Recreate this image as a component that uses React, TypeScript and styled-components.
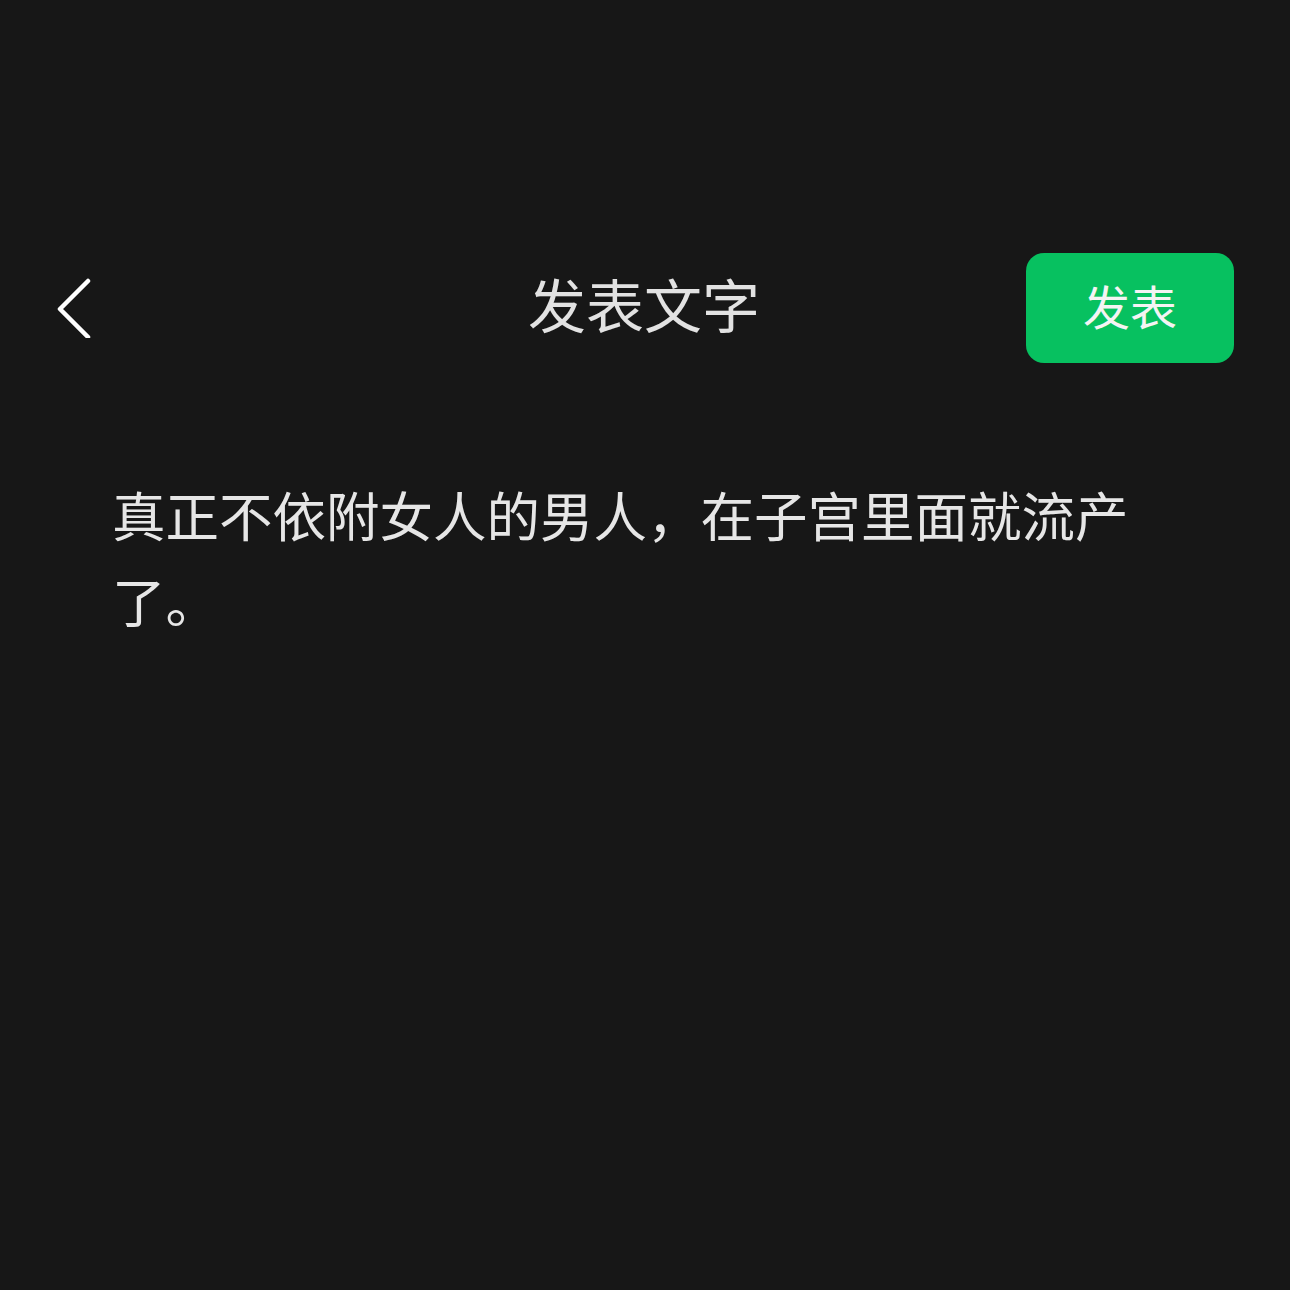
import React from "react";
import styled, { createGlobalStyle } from "styled-components";

const Global = createGlobalStyle`
  html, body { margin: 0; padding: 0; background: #171717; }
  body { font-family: "Noto Sans CJK SC", "Noto Sans", sans-serif; }
`;

const Page = styled.div`
  width: 1290px;
  height: 1290px;
  background: #171717;
  display: flex;
  flex-direction: column;
`;

const Header = styled.header`
  margin-top: 253px;
  height: 110px;
  padding: 0 56px 0 54px;
  display: grid;
  grid-template-columns: 1fr auto 1fr;
  align-items: center;
`;

const BackButton = styled.button`
  justify-self: start;
  background: none;
  border: none;
  padding: 0;
  width: 40px;
  height: 60px;
  display: flex;
  align-items: center;
  cursor: pointer;
`;

const Title = styled.h1`
  margin: 0;
  padding-bottom: 10px;
  font-size: 58px;
  font-weight: 400;
  color: #e2e2e2;
  letter-spacing: 0;
  line-height: 1;
`;

const PublishButton = styled.button`
  justify-self: end;
  width: 208px;
  height: 110px;
  padding: 0 0 8px;
  border: none;
  border-radius: 18px;
  background: #07c160;
  color: #f4f4f4;
  font-family: inherit;
  font-size: 47px;
  font-weight: 400;
  cursor: pointer;
`;

const Content = styled.p`
  margin: 108px 0 0 112px;
  width: 1070px;
  font-size: 53.5px;
  line-height: 86px;
  color: #e6e6e6;
  font-weight: 400;
`;

export default function App() {
  return (
    <>
      <Global />
      <Page>
        <Header>
          <BackButton aria-label="返回">
            <svg width="40" height="60" viewBox="0 0 40 60" fill="none">
              <path d="M34 3 L6 31 L34 59" stroke="#ffffff" strokeWidth="4.5" strokeLinecap="round" strokeLinejoin="round" />
            </svg>
          </BackButton>
          <Title>发表文字</Title>
          <PublishButton>发表</PublishButton>
        </Header>
        <Content>真正不依附女人的男人，在子宫里面就流产了。</Content>
      </Page>
    </>
  );
}
